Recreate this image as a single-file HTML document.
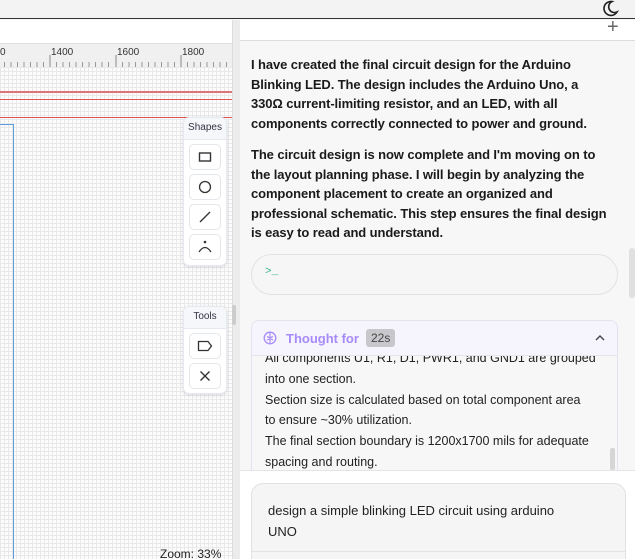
<!DOCTYPE html>
<html><head><style>
*{margin:0;padding:0;box-sizing:border-box}
html,body{width:635px;height:559px;overflow:hidden}
body{background:#f7f7f7;font-family:"Liberation Sans",sans-serif;position:relative}
.abs{position:absolute}
#top{left:0;top:0;width:635px;height:19px;background:#f3f3f3;border-bottom:1px solid #333}
#left{left:0;top:20px;width:232px;height:539px;background:#fff}
#grid{left:0;top:67px;width:232px;height:492px;background-color:#fcfcfc;
background-image:linear-gradient(#e9e9e9 1px,transparent 1px),linear-gradient(90deg,#e9e9e9 1px,transparent 1px);
background-size:4px 4px}
#ruler{left:0;top:43px;width:232px;height:24px;background:#f0f0f0;border-top:1px solid #ddd}
.lbl{font-size:10px;color:#333;top:47px}
.panel{background:#fff;border:1px solid #e6eaf0;border-radius:6px;box-shadow:0 1px 3px rgba(0,0,0,.12)}
.ph{font-size:10px;color:#334;text-align:center;height:22px;line-height:20px;background:#f5f7fa;border-bottom:1px solid #e6eaf0;border-radius:6px 6px 0 0}
.btn{width:32px;height:26px;border:1px solid #e3e6ea;border-radius:5px;margin:4px auto 0;display:flex;align-items:center;justify-content:center}
#div{left:232px;top:20px;width:8px;height:539px;background:#ececec;border-left:1px solid #ddd}
#rhead{left:240px;top:20px;width:395px;height:21px;background:#fff;border-bottom:1px solid #ddd}
.txt{left:251px;font-size:13px;font-weight:bold;color:#1a1a1a;line-height:19.6px;letter-spacing:-0.1px}
.th{font-size:12.5px;color:#222;line-height:20.8px}
</style></head><body>
<div id="top" class="abs"></div>
<svg class="abs" style="left:600px;top:0" width="20" height="18" viewBox="0 0 20 18"><path d="M12 1.5 A7 7 0 1 0 17 12 A5.5 5.5 0 0 1 12 1.5Z" fill="none" stroke="#222" stroke-width="1.6"/></svg>
<div id="left" class="abs"></div>
<div id="ruler" class="abs"></div>
<svg class="abs" style="left:0;top:55px" width="232" height="12">
<g stroke="#888" stroke-width="1">
<line x1="50" y1="0" x2="50" y2="12"/><line x1="116" y1="0" x2="116" y2="12"/><line x1="181" y1="0" x2="181" y2="12"/>
</g>
<path d="M4.5 7V12M11 7V12M17.5 7V12M24 7V12M30.5 7V12M37 7V12M43.5 7V12M56.5 7V12M63 7V12M69.5 7V12M76 7V12M82.5 7V12M89 7V12M95.5 7V12M102 7V12M108.5 7V12M122.5 7V12M129 7V12M135.5 7V12M142 7V12M148.5 7V12M155 7V12M161.5 7V12M168 7V12M174.5 7V12M187.5 7V12M194 7V12M200.5 7V12M207 7V12M213.5 7V12M220 7V12M226.5 7V12" stroke="#999"/>
</svg>
<div class="abs lbl" style="left:0px">0</div>
<div class="abs lbl" style="left:51px">1400</div>
<div class="abs lbl" style="left:117px">1600</div>
<div class="abs lbl" style="left:182px">1800</div>
<div id="grid" class="abs"></div>
<div class="abs" style="left:0;top:91px;width:232px;height:2px;background:#d77"></div>
<div class="abs" style="left:0;top:99px;width:232px;height:1px;background:#d55"></div>
<div class="abs" style="left:0;top:117px;width:232px;height:1px;background:#d55"></div>
<div class="abs" style="left:-2px;top:124px;width:16px;height:440px;border:1px solid #5b9be0"></div>
<div class="abs" style="left:160px;top:547px;font-size:12px;color:#222">Zoom: 33%</div>

<div class="abs panel" style="left:183px;top:117px;width:44px;height:149px">
<div class="ph">Shapes</div>
<div class="btn"><svg width="14" height="12"><rect x="1.5" y="2" width="11" height="8" fill="none" stroke="#333" stroke-width="1.4"/></svg></div>
<div class="btn"><svg width="14" height="14"><circle cx="7" cy="7" r="5.5" fill="none" stroke="#333" stroke-width="1.3"/></svg></div>
<div class="btn"><svg width="14" height="14"><line x1="2" y1="12" x2="12" y2="2" stroke="#333" stroke-width="1.3"/></svg></div>
<div class="btn"><svg width="16" height="16"><circle cx="8" cy="3" r="1.3" fill="#333"/><path d="M2 13 Q8 4 14 13" fill="none" stroke="#333" stroke-width="1.3"/></svg></div>
</div>
<div class="abs panel" style="left:183px;top:306px;width:44px;height:88px">
<div class="ph">Tools</div>
<div class="btn"><svg width="16" height="12"><path d="M1.5 1.5H11L14.5 6L11 10.5H1.5Z" fill="none" stroke="#333" stroke-width="1.3"/></svg></div>
<div class="btn"><svg width="14" height="14"><path d="M2.5 2.5L11.5 11.5M11.5 2.5L2.5 11.5" stroke="#333" stroke-width="1.4"/></svg></div>
</div>

<div id="div" class="abs"></div>
<div class="abs" style="left:232px;top:305px;width:4px;height:20px;background:#ccc;border-radius:2px"></div>
<div id="rhead" class="abs"></div>
<div class="abs" style="left:607px;top:17px;font-size:20px;color:#666;line-height:20px">+</div>

<div class="abs txt" style="top:55px">I have created the final circuit design for the Arduino<br>Blinking LED. The design includes the Arduino Uno, a<br>330Ω current-limiting resistor, and an LED, with all<br>components correctly connected to power and ground.</div>
<div class="abs txt" style="top:145px">The circuit design is now complete and I'm moving on to<br>the layout planning phase. I will begin by analyzing the<br>component placement to create an organized and<br>professional schematic. This step ensures the final design<br>is easy to read and understand.</div>

<div class="abs" style="left:251px;top:254px;width:367px;height:41px;border:1px solid #e2e2e2;border-radius:21px;background:#f6f6f6"></div>
<div class="abs" style="left:265px;top:266px;font-size:11px;color:#3bb58a;font-family:'Liberation Mono',monospace">&gt;_</div>
<div class="abs" style="left:629px;top:248px;width:6px;height:50px;background:#e0e0e0;border-radius:3px"></div>

<div class="abs" style="left:251px;top:320px;width:367px;height:150px;border:1px solid #e4e2ee;border-bottom:none;border-radius:8px 8px 0 0;background:#f7f7f7;overflow:hidden">
<div class="th" style="position:absolute;left:13px;top:27px">All components U1, R1, D1, PWR1, and GND1 are grouped<br>into one section.<br>Section size is calculated based on total component area<br>to ensure ~30% utilization.<br>The final section boundary is 1200x1700 mils for adequate<br>spacing and routing.</div>
<div style="position:absolute;left:0;top:0;width:367px;height:35px;background:#f6f4fd;border-bottom:1px solid #e6e3ef">
<svg style="position:absolute;left:11px;top:10px" width="14" height="14"><circle cx="7" cy="7" r="5.8" fill="none" stroke="#a78bfa" stroke-width="1.3"/><path d="M7 2v10M4 5.5q3 2 6 0M4 9q3-2 6 0" fill="none" stroke="#a78bfa" stroke-width="1.1"/></svg>
<span style="position:absolute;left:34px;top:10px;font-size:13px;font-weight:bold;color:#a78bfa">Thought for</span>
<span style="position:absolute;left:114px;top:8px;font-size:12px;color:#444;background:#c8c8cc;border-radius:3px;padding:1px 5px;line-height:16px">22s</span>
<svg style="position:absolute;right:14px;top:13px" width="10" height="8"><path d="M1 6L5 2L9 6" fill="none" stroke="#444" stroke-width="1.4"/></svg>
</div>
</div>
<div class="abs" style="left:610px;top:448px;width:5px;height:22px;background:#d6d6d6;border-radius:2px"></div>

<div class="abs" style="left:240px;top:470px;width:395px;height:89px;background:#fff;border-top:1px solid #e4e4e4"></div>
<div class="abs" style="left:251px;top:483px;width:375px;height:76px;border:1px solid #e2e2e2;border-bottom:none;border-radius:12px 12px 0 0;background:#f5f5f5"></div>
<div class="abs" style="left:251px;top:551px;width:375px;height:1px;background:#e2e2e2"></div>
<div class="abs" style="left:268px;top:500px;font-size:13px;color:#222;line-height:21px">design a simple blinking LED circuit using arduino<br>UNO</div>
</body></html>
